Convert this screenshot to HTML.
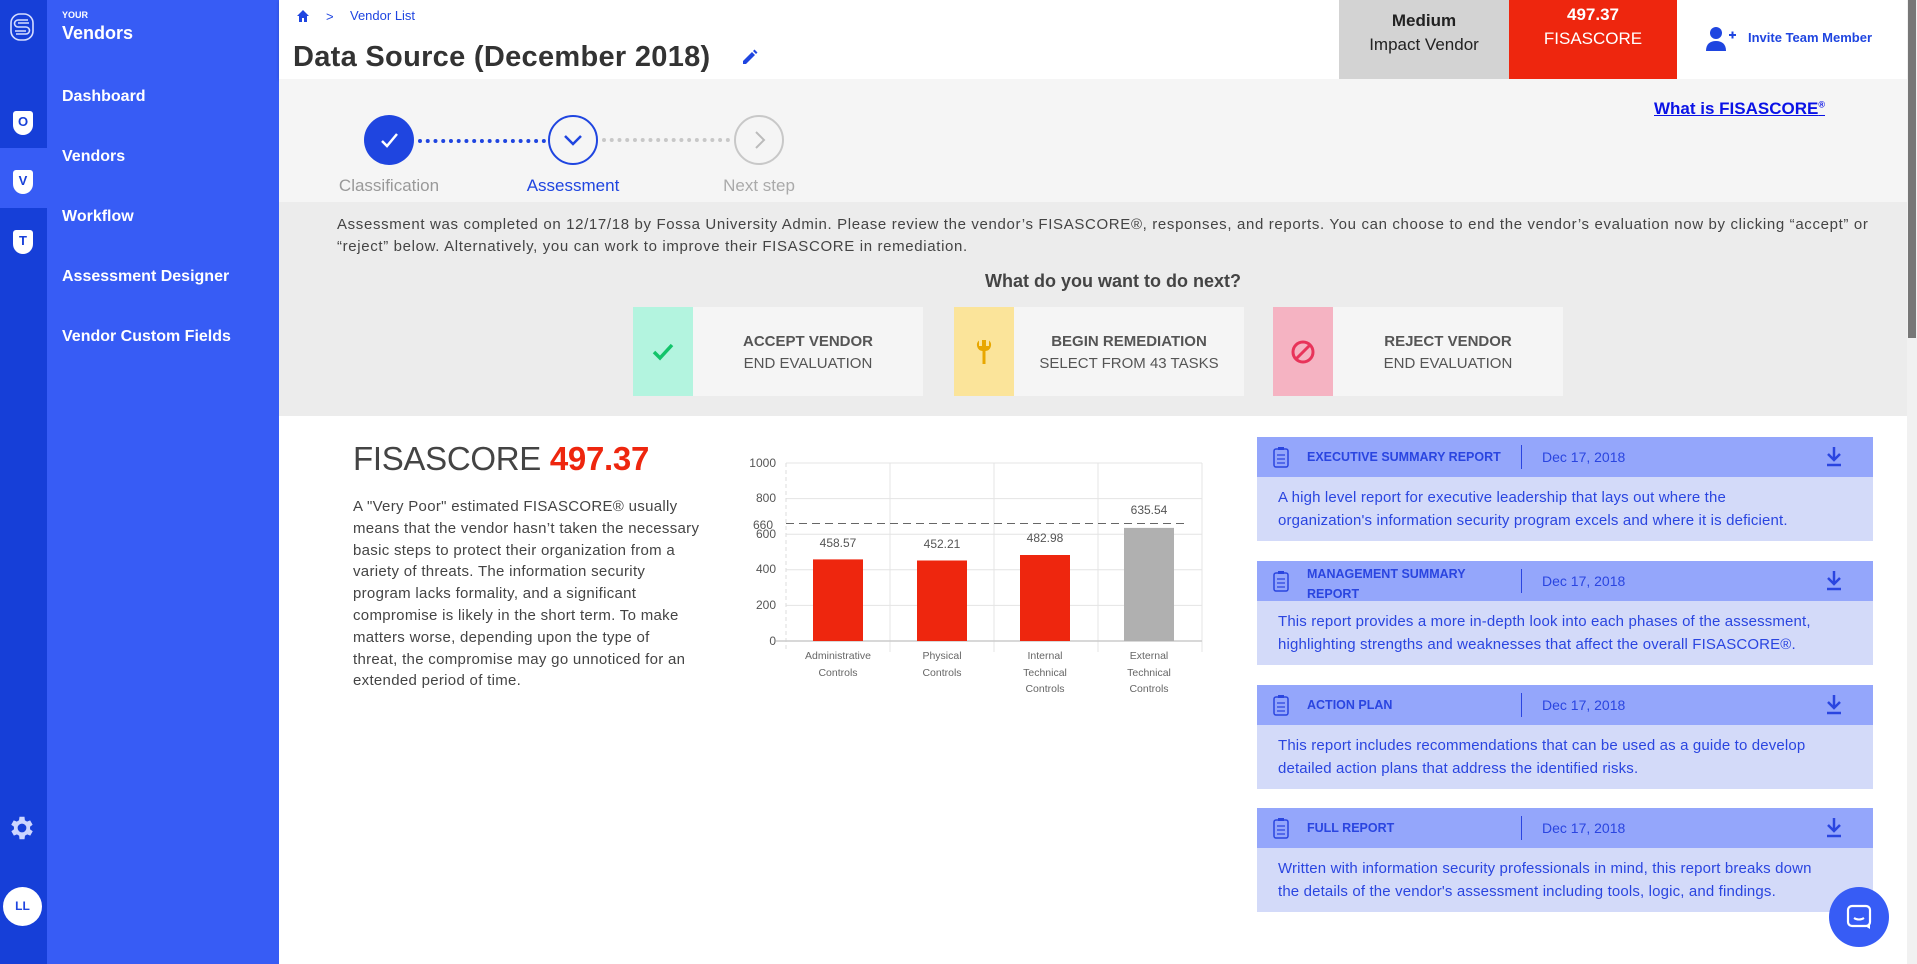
<!DOCTYPE html>
<html><head><meta charset="utf-8"><style>
*{margin:0;padding:0;box-sizing:border-box}
body{width:1917px;height:964px;overflow:hidden;font-family:"Liberation Sans",sans-serif;background:#fff;position:relative}
.a{position:absolute}
.strip{left:0;top:0;width:47px;height:964px;background:#163fd8}
.panel{left:47px;top:0;width:232px;height:964px;background:#375cf5}
.nav{left:62px;color:#fff;font-size:16px;font-weight:bold}
.shield{left:13px;width:20px;height:24px;background:#fff;border-radius:3px 3px 10px 10px;color:#163fd8;font-size:13px;font-weight:bold;text-align:center;line-height:22px}
.hdr{left:279px;top:0;width:1628px;height:79px;background:#fff;box-shadow:0 1px 3px rgba(0,0,0,.2)}
.steps{left:279px;top:79px;width:1628px;height:123px;background:#f5f5f5}
.grey{left:279px;top:202px;width:1628px;height:214px;background:#ececec}
.circ{width:50px;height:50px;border-radius:50%;top:115px}
.lbl{top:176px;font-size:17px;width:200px;text-align:center}
.btn{top:307px;width:290px;height:89px;background:#f5f5f5}
.btn .ic{position:absolute;left:0;top:0;width:60px;height:89px}
.btn .t{position:absolute;left:60px;right:0;top:24px;text-align:center;color:#555;font-size:15px;line-height:22px}
.card{left:1257px;width:616px}
.card .h{height:40px;background:#94a6fb;position:relative;color:#2a45e0}
.card .b{background:#d3daf9;color:#2a45e0;font-size:15px;line-height:23px;padding:9px 10px 9px 21px;white-space:nowrap;letter-spacing:.15px}
.ct{position:absolute;left:50px;top:13px;font-size:12.5px;font-weight:bold}
.dv{position:absolute;left:264px;top:8px;width:1px;height:24px;background:#2a45e0}
.dt{position:absolute;left:285px;top:12px;font-size:14px}
.clip{position:absolute;left:16px;top:9px}
.dl{position:absolute;left:568px;top:8px}
</style></head><body>
<div class="a strip"></div>
<div class="a" style="left:0;top:148px;width:47px;height:60px;background:#375cf5"></div>
<div class="a panel"></div>
<svg class="a" style="left:9px;top:12px" width="26" height="30" viewBox="0 0 26 30"><g fill="none" stroke="#d6ddff" stroke-width="1.6"><rect x="2" y="2" width="22" height="26" rx="9"/><path d="M19 8H9a3 3 0 0 0 0 7h8a3 3 0 0 1 0 7H7"/><path d="M20 11H9M6 19h11"/></g></svg>
<div class="a" style="left:62px;top:10px;color:#fff;font-size:9px;font-weight:bold">YOUR</div>
<div class="a" style="left:62px;top:23px;color:#fff;font-size:18px;font-weight:bold">Vendors</div>
<div class="a shield" style="top:111px">O</div>
<div class="a shield" style="top:170px">V</div>
<div class="a shield" style="top:230px">T</div>
<div class="a nav" style="top:88px">Dashboard</div>
<div class="a nav" style="top:148px">Vendors</div>
<div class="a nav" style="top:208px">Workflow</div>
<div class="a nav" style="top:268px">Assessment Designer</div>
<div class="a nav" style="top:328px">Vendor Custom Fields</div>
<svg class="a" style="left:7px;top:813px" width="30" height="30" viewBox="0 0 24 24"><path fill="#cdd6ff" d="M19.4 13a7.5 7.5 0 0 0 0-2l2.1-1.6-2-3.5-2.5 1a7 7 0 0 0-1.7-1L15 3h-4l-.4 2.9a7 7 0 0 0-1.7 1l-2.5-1-2 3.5L6.6 11a7.5 7.5 0 0 0 0 2l-2.1 1.6 2 3.5 2.5-1a7 7 0 0 0 1.7 1L11 21h4l.4-2.9a7 7 0 0 0 1.7-1l2.5 1 2-3.5zM13 15.5a3.5 3.5 0 1 1 0-7 3.5 3.5 0 0 1 0 7z" transform="translate(-1 0)"/></svg>
<div class="a" style="left:3px;top:887px;width:39px;height:39px;border-radius:50%;background:#fff;color:#1f45e0;font-size:12px;font-weight:bold;text-align:center;line-height:39px">LL</div>

<div class="a hdr"></div>
<svg class="a" style="left:296px;top:9px" width="14" height="14" viewBox="0 0 14 14"><path fill="#1f45e0" d="M7 1 1 7h2v6h3V9h2v4h3V7h2z"/></svg>
<div class="a" style="left:326px;top:9px;color:#1f45e0;font-size:13px">&gt;</div>
<div class="a" style="left:350px;top:8px;color:#1f45e0;font-size:13px">Vendor List</div>
<div class="a" style="left:293px;top:41px;color:#333;font-size:29px;font-weight:bold;letter-spacing:.3px">Data Source (December 2018)</div>
<svg class="a" style="left:741px;top:48px" width="18" height="18" viewBox="0 0 18 18"><path fill="#1f45e0" d="M2 13v3h3l9-9-3-3zM15 6l1.5-1.5-3-3L12 3z"/></svg>
<div class="a" style="left:1339px;top:0;width:170px;height:79px;background:#d3d3d3;text-align:center;color:#222;font-size:17px;line-height:24px;padding-top:9px"><b>Medium</b><br>Impact Vendor</div>
<div class="a" style="left:1509px;top:0;width:168px;height:79px;background:#ee260e;text-align:center;color:#fff;font-size:17px;line-height:24px;padding-top:3px"><b>497.37</b><br>FISASCORE</div>
<svg class="a" style="left:1706px;top:26px" width="30" height="26" viewBox="0 0 30 26"><circle cx="10" cy="7" r="6" fill="#1f45e0"/><path fill="#1f45e0" d="M0 25c0-7 4-10 10-10s10 3 10 10z"/><path stroke="#1f45e0" stroke-width="2" d="M23 9h7M26.5 5.5v7"/></svg>
<div class="a" style="left:1748px;top:30px;color:#1f45e0;font-size:13px;font-weight:bold">Invite Team Member</div>
<div class="a" style="left:1907px;top:0;width:10px;height:964px;background:#f1f1f1"></div>
<div class="a" style="left:1908px;top:0;width:8px;height:338px;background:#777"></div>

<div class="a steps"></div>
<div class="a circ" style="left:364px;background:#1f45e0"></div>
<svg class="a" style="left:377px;top:128px" width="24" height="24" viewBox="0 0 24 24"><path d="M5 13l5 5 10-12" fill="none" stroke="#fff" stroke-width="2.5"/></svg>
<div class="a" style="left:418px;top:139px;width:128px;border-top:4px dotted #1f45e0"></div>
<div class="a circ" style="left:548px;border:2px solid #1f45e0"></div>
<svg class="a" style="left:561px;top:128px" width="24" height="24" viewBox="0 0 24 24"><path d="M4 8l8 8 8-8" fill="none" stroke="#1f45e0" stroke-width="2.5"/></svg>
<div class="a" style="left:602px;top:138px;width:128px;border-top:4px dotted #c8c8c8"></div>
<div class="a circ" style="left:734px;border:2px solid #c8c8c8"></div>
<svg class="a" style="left:747px;top:128px" width="24" height="24" viewBox="0 0 24 24"><path d="M9 4l8 8-8 8" fill="none" stroke="#bbb" stroke-width="2"/></svg>
<div class="a lbl" style="left:289px;color:#999">Classification</div>
<div class="a lbl" style="left:473px;color:#1f45e0">Assessment</div>
<div class="a lbl" style="left:659px;color:#aaa">Next step</div>
<div class="a" style="left:1654px;top:99px;color:#0a12e6;font-size:17px;text-decoration:underline;font-weight:bold">What is FISASCORE<sup style="font-size:9px">®</sup></div>

<div class="a grey"></div>
<div class="a" style="left:337px;top:214px;white-space:nowrap;color:#444;font-size:15px;line-height:22px;letter-spacing:.65px">Assessment was completed on 12/17/18 by Fossa University Admin. Please review the vendor’s FISASCORE®, responses, and reports. You can choose to end the vendor’s evaluation now by clicking “accept” or<br>“reject” below. Alternatively, you can work to improve their FISASCORE in remediation.</div>
<div class="a" style="left:779px;top:271px;width:668px;text-align:center;color:#444;font-size:18px;font-weight:bold">What do you want to do next?</div>
<div class="a btn" style="left:633px"><div class="ic" style="background:#b3f4df"><svg style="position:absolute;left:18px;top:33px" width="24" height="24" viewBox="0 0 24 24"><path d="M3 12l6 6L21 5" fill="none" stroke="#12c46a" stroke-width="3.5"/></svg></div><div class="t"><b>ACCEPT VENDOR</b><br>END EVALUATION</div></div>
<div class="a btn" style="left:954px"><div class="ic" style="background:#fbe49a"><svg style="position:absolute;left:18px;top:31px" width="24" height="28" viewBox="0 0 24 28"><path d="M7 2.5A6 6 0 0 0 10.5 13V26h3V13A6 6 0 0 0 17 2.5V8h-3V2h-4v6H7z" fill="#e8a700"/></svg></div><div class="t"><b>BEGIN REMEDIATION</b><br>SELECT FROM 43 TASKS</div></div>
<div class="a btn" style="left:1273px"><div class="ic" style="background:#f5b3c2"><svg style="position:absolute;left:17px;top:32px" width="26" height="26" viewBox="0 0 26 26"><circle cx="13" cy="13" r="10" fill="none" stroke="#e8345a" stroke-width="3"/><path d="M6 20L20 6" stroke="#e8345a" stroke-width="3"/></svg></div><div class="t"><b>REJECT VENDOR</b><br>END EVALUATION</div></div>

<div class="a" style="left:353px;top:440px;font-size:33px;color:#444;letter-spacing:-.3px">FISASCORE <b style="color:#ee260e">497.37</b></div>
<div class="a" style="left:353px;top:496px;white-space:nowrap;color:#444;font-size:15px;line-height:21.8px;letter-spacing:.3px">A "Very Poor" estimated FISASCORE® usually<br>means that the vendor hasn’t taken the necessary<br>basic steps to protect their organization from a<br>variety of threats. The information security<br>program lacks formality, and a significant<br>compromise is likely in the short term. To make<br>matters worse, depending upon the type of<br>threat, the compromise may go unnoticed for an<br>extended period of time.</div>

<svg class="a" style="left:740px;top:445px" width="470" height="260" viewBox="740 445 470 260" font-family="Liberation Sans" font-size="12" fill="#555">
<g stroke="#e4e4e4"><path d="M786 463H1202M786 498.6H1202M786 534.2H1202M786 569.8H1202M786 605.4H1202M890 463V652M994 463V652M1098 463V652M1202 463V652"/></g>
<path d="M786 463V652" stroke="#ddd" stroke-dasharray="4 3"/>
<path d="M776 641H1202" stroke="#ccc" stroke-width="1.5"/>
<g text-anchor="end"><text x="776" y="467">1000</text><text x="776" y="502">800</text><text x="776" y="538">600</text><text x="776" y="573">400</text><text x="776" y="609">200</text><text x="776" y="645">0</text><text x="773" y="529">660</text></g>
<rect x="813" y="559.4" width="50" height="81.6" fill="#ee260e"/>
<rect x="917" y="560.5" width="50" height="80.5" fill="#ee260e"/>
<rect x="1020" y="555" width="50" height="86" fill="#ee260e"/>
<rect x="1124" y="527.9" width="50" height="113.1" fill="#b0b0b0"/>
<path d="M786 523.5H1188" stroke="#666" stroke-dasharray="8 5"/>
<g text-anchor="middle"><text x="838" y="547">458.57</text><text x="942" y="548">452.21</text><text x="1045" y="542">482.98</text><text x="1149" y="514">635.54</text></g>
<g text-anchor="middle" font-size="10.5" fill="#666"><text x="838" y="659">Administrative</text><text x="838" y="676">Controls</text><text x="942" y="659">Physical</text><text x="942" y="676">Controls</text><text x="1045" y="659">Internal</text><text x="1045" y="676">Technical</text><text x="1045" y="692">Controls</text><text x="1149" y="659">External</text><text x="1149" y="676">Technical</text><text x="1149" y="692">Controls</text></g>
</svg>

<div class="a card" style="top:437px"><div class="h"><svg class="clip" width="16" height="22" viewBox="0 0 16 22"><rect x="1" y="3" width="14" height="18" rx="2" fill="none" stroke="#2a45e0" stroke-width="1.5"/><rect x="5" y="1" width="6" height="3" fill="#2a45e0"/><path d="M4 9h8M4 13h8M4 17h8" stroke="#2a45e0" stroke-width="1.3"/></svg><div class="ct">EXECUTIVE SUMMARY REPORT</div><div class="dv"></div><div class="dt">Dec 17, 2018</div><svg class="dl" width="18" height="22" viewBox="0 0 18 22"><path d="M9 2v12M3 9l6 6 6-6" fill="none" stroke="#2a45e0" stroke-width="2.5"/><path d="M2 20h14" stroke="#2a45e0" stroke-width="2.5"/></svg></div><div class="b">A high level report for executive leadership that lays out where the<br>organization's information security program excels and where it is deficient.</div></div>

<div class="a card" style="top:561px"><div class="h"><svg class="clip" width="16" height="22" viewBox="0 0 16 22"><rect x="1" y="3" width="14" height="18" rx="2" fill="none" stroke="#2a45e0" stroke-width="1.5"/><rect x="5" y="1" width="6" height="3" fill="#2a45e0"/><path d="M4 9h8M4 13h8M4 17h8" stroke="#2a45e0" stroke-width="1.3"/></svg><div class="ct" style="top:3px;line-height:20px">MANAGEMENT SUMMARY<br>REPORT</div><div class="dv"></div><div class="dt">Dec 17, 2018</div><svg class="dl" width="18" height="22" viewBox="0 0 18 22"><path d="M9 2v12M3 9l6 6 6-6" fill="none" stroke="#2a45e0" stroke-width="2.5"/><path d="M2 20h14" stroke="#2a45e0" stroke-width="2.5"/></svg></div><div class="b">This report provides a more in-depth look into each phases of the assessment,<br>highlighting strengths and weaknesses that affect the overall FISASCORE®.</div></div>

<div class="a card" style="top:685px"><div class="h"><svg class="clip" width="16" height="22" viewBox="0 0 16 22"><rect x="1" y="3" width="14" height="18" rx="2" fill="none" stroke="#2a45e0" stroke-width="1.5"/><rect x="5" y="1" width="6" height="3" fill="#2a45e0"/><path d="M4 9h8M4 13h8M4 17h8" stroke="#2a45e0" stroke-width="1.3"/></svg><div class="ct">ACTION PLAN</div><div class="dv"></div><div class="dt">Dec 17, 2018</div><svg class="dl" width="18" height="22" viewBox="0 0 18 22"><path d="M9 2v12M3 9l6 6 6-6" fill="none" stroke="#2a45e0" stroke-width="2.5"/><path d="M2 20h14" stroke="#2a45e0" stroke-width="2.5"/></svg></div><div class="b">This report includes recommendations that can be used as a guide to develop<br>detailed action plans that address the identified risks.</div></div>

<div class="a card" style="top:808px"><div class="h"><svg class="clip" width="16" height="22" viewBox="0 0 16 22"><rect x="1" y="3" width="14" height="18" rx="2" fill="none" stroke="#2a45e0" stroke-width="1.5"/><rect x="5" y="1" width="6" height="3" fill="#2a45e0"/><path d="M4 9h8M4 13h8M4 17h8" stroke="#2a45e0" stroke-width="1.3"/></svg><div class="ct">FULL REPORT</div><div class="dv"></div><div class="dt">Dec 17, 2018</div><svg class="dl" width="18" height="22" viewBox="0 0 18 22"><path d="M9 2v12M3 9l6 6 6-6" fill="none" stroke="#2a45e0" stroke-width="2.5"/><path d="M2 20h14" stroke="#2a45e0" stroke-width="2.5"/></svg></div><div class="b">Written with information security professionals in mind, this report breaks down<br>the details of the vendor's assessment including tools, logic, and findings.</div></div>

<div class="a" style="left:1829px;top:887px;width:60px;height:60px;border-radius:50%;background:#375cf5"></div>
<svg class="a" style="left:1845px;top:903px" width="28" height="28" viewBox="0 0 28 28"><rect x="3" y="3" width="22" height="20" rx="4" fill="none" stroke="#fff" stroke-width="2.2"/><path d="M20 23l5 3v-5" fill="#fff"/><path d="M9 15c3 2 7 2 10 0" fill="none" stroke="#fff" stroke-width="2"/></svg>
</body></html>
